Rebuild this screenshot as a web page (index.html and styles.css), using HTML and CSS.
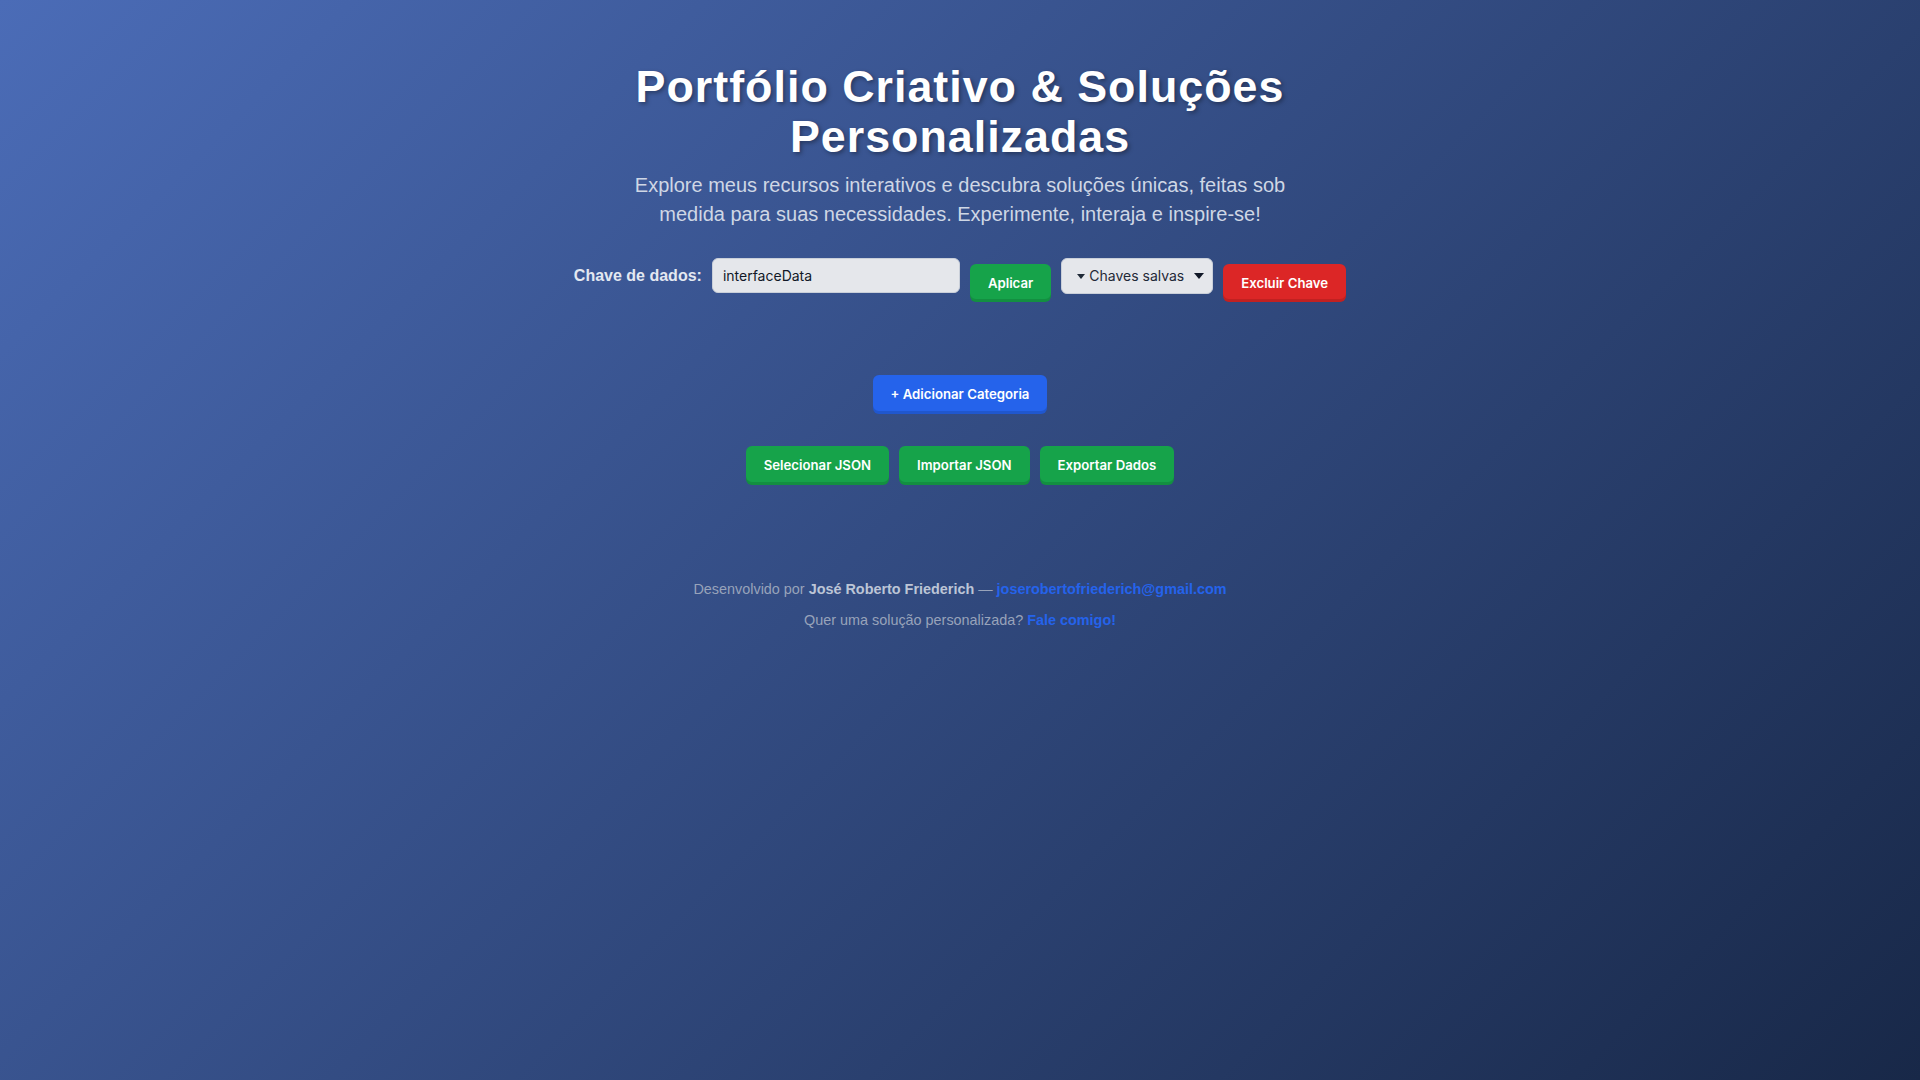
FILE: index.html
```html
<!DOCTYPE html>
<html lang="pt-BR">
<head>
<meta charset="utf-8">
<title>Portfólio Criativo &amp; Soluções Personalizadas</title>
<link rel="stylesheet" href="styles.css">
</head>
<body>
<main class="page">
  <header class="hero">
    <h1 class="title">Portfólio Criativo &amp; Soluções Personalizadas</h1>
    <p class="subtitle">Explore meus recursos interativos e descubra soluções únicas, feitas sob medida para suas necessidades. Experimente, interaja e inspire-se!</p>
  </header>

  <section class="controls">
    <label class="key-label" for="key">Chave de dados:</label>
    <input class="key-input" id="key" type="text" value="interfaceData">
    <button class="btn btn-green btn-low">Aplicar</button>
    <div class="select">
      <svg class="caret-small" width="8" height="5" viewBox="0 0 8 5"><path d="M0 0h8L4 5z" fill="#1f2937"/></svg>
      <span class="select-text">Chaves salvas</span>
      <svg class="caret-arrow" width="10" height="6" viewBox="0 0 10 6"><path d="M0 0h10L5 6z" fill="#111827"/></svg>
    </div>
    <button class="btn btn-red btn-low">Excluir Chave</button>
  </section>

  <section class="add-row">
    <button class="btn btn-blue">+ Adicionar Categoria</button>
  </section>

  <section class="json-row">
    <button class="btn btn-green">Selecionar JSON</button>
    <button class="btn btn-green">Importar JSON</button>
    <button class="btn btn-green">Exportar Dados</button>
  </section>

  <footer class="footer">
    <p class="footer-line">Desenvolvido por <strong class="author">José Roberto Friederich</strong> — <a class="link" href="#">joserobertofriederich@gmail.com</a></p>
    <p class="footer-line">Quer uma solução personalizada? <a class="link" href="#">Fale comigo!</a></p>
  </footer>
</main>
</body>
</html>
```

FILE: styles.css
```css
html, body {
  margin: 0;
  padding: 0;
}

body {
  min-height: 100vh;
  background: linear-gradient(135deg, #4b6cb7 0%, #182848 100%);
  font-family: "Liberation Sans", Arial, sans-serif;
  color: #ffffff;
}

.page {
  display: flex;
  flex-direction: column;
  align-items: center;
  padding-top: 61px;
}

.hero {
  max-width: 700px;
  text-align: center;
}

.title {
  margin: 0;
  font-size: 44.8px;
  line-height: 50px;
  font-weight: 700;
  letter-spacing: 1px;
  color: #ffffff;
  text-shadow: 2px 2px 4px rgba(0, 0, 0, 0.35);
}

.subtitle {
  margin: 10px auto 0;
  max-width: 680px;
  font-size: 20px;
  line-height: 29px;
  color: #cfd7e5;
}

.controls {
  display: flex;
  align-items: center;
  gap: 10px;
  margin-top: 20px;
}

.key-label {
  font-weight: 700;
  font-size: 16px;
  color: #e3e8f1;
}

.key-input {
  box-sizing: border-box;
  width: 248px;
  height: 35px;
  padding: 0 10px;
  border: 1px solid #c9cfd9;
  border-radius: 6px;
  background: #e5e7eb;
  font-family: Inter, "Liberation Sans", sans-serif;
  font-size: 14px;
  color: #111827;
  outline: none;
}

.select {
  box-sizing: border-box;
  width: 152px;
  height: 36px;
  display: flex;
  align-items: center;
  padding: 0 8px 0 15px;
  border: 1px solid #c9cfd9;
  border-radius: 6px;
  background: #e5e7eb;
  font-family: Inter, "Liberation Sans", sans-serif;
  font-size: 14px;
  color: #1f2937;
}

.caret-small {
  margin-right: 4px;
  margin-top: 1px;
}

.caret-arrow {
  margin-left: auto;
}

.btn {
  border: none;
  border-radius: 6px;
  padding: 10px 18px;
  line-height: 19px;
  font-family: Inter, "Liberation Sans", sans-serif;
  font-size: 13.2px;
  font-weight: 600;
  color: #ffffff;
  cursor: pointer;
  box-shadow: inset 0 -3px 0 rgba(0, 0, 0, 0.12);
}

.btn-low {
  margin-top: 15px;
  line-height: 18px;
}

.btn-green {
  background: #16a34a;
}

.btn-red {
  background: #dc2626;
}

.btn-blue {
  background: #2563eb;
}

.add-row {
  margin-top: 73px;
  display: flex;
  justify-content: center;
}

.json-row {
  margin-top: 32px;
  display: flex;
  justify-content: center;
  gap: 10px;
}

.footer {
  margin-top: 96px;
  display: flex;
  flex-direction: column;
  align-items: center;
  gap: 15px;
  font-size: 14.4px;
  color: #98a3ba;
  text-align: center;
}

.footer-line {
  margin: 0;
}

.author {
  color: #bcc5d6;
}

.link {
  color: #2563eb;
  font-weight: 700;
  text-decoration: none;
}
```
